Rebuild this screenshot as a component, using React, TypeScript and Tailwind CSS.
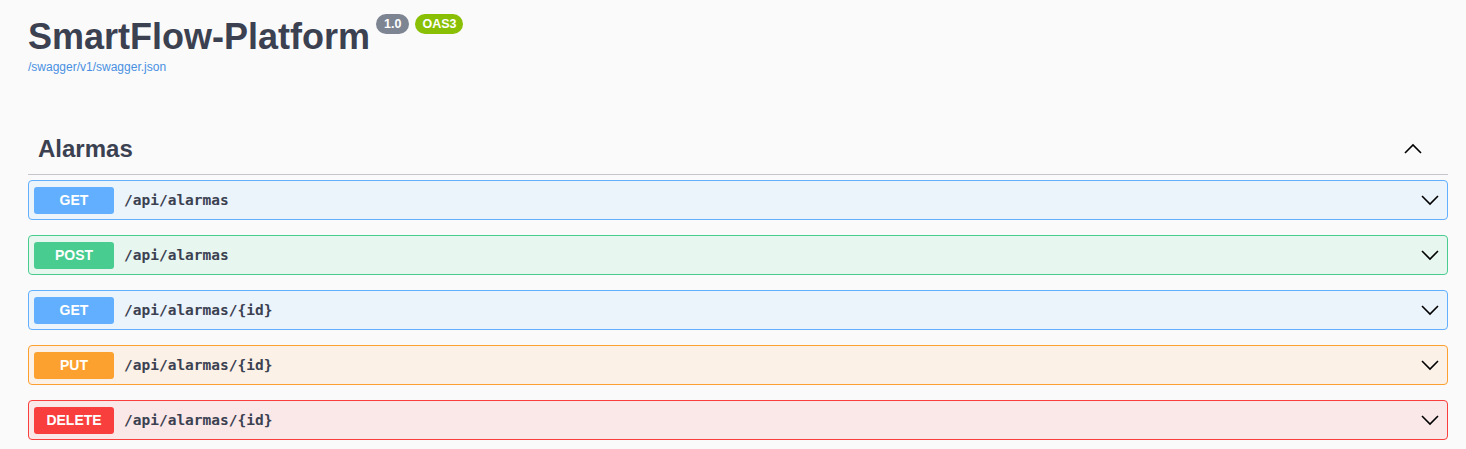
import React from "react";

type Op = { method: string; path: string };

const ops: Op[] = [
  { method: "GET", path: "/api/alarmas" },
  { method: "POST", path: "/api/alarmas" },
  { method: "GET", path: "/api/alarmas/{id}" },
  { method: "PUT", path: "/api/alarmas/{id}" },
  { method: "DELETE", path: "/api/alarmas/{id}" },
];

const styles: Record<string, { box: string; badge: string }> = {
  GET: { box: "border-[#61affe] bg-[#ebf3fb]", badge: "bg-[#61affe]" },
  POST: { box: "border-[#49cc90] bg-[#e8f6f0]", badge: "bg-[#49cc90]" },
  PUT: { box: "border-[#fca130] bg-[#fbf1e6]", badge: "bg-[#fca130]" },
  DELETE: { box: "border-[#f93e3e] bg-[#fae7e7]", badge: "bg-[#f93e3e]" },
};

const Chevron = ({ up }: { up?: boolean }) => (
  <svg width="20" height="20" viewBox="0 0 20 20" className="text-black">
    <path
      d={up ? "M2 14 L10 6 L18 14" : "M2 6 L10 14 L18 6"}
      fill="none"
      stroke="currentColor"
      strokeWidth="1.6"
    />
  </svg>
);

const OpBlock = ({ op }: { op: Op }) => {
  const s = styles[op.method];
  return (
    <div className={`flex h-[40px] items-center rounded-[4px] border pl-[5px] pr-[7px] ${s.box}`}>
      <span
        className={`flex h-[27px] w-[80px] items-center justify-center rounded-[3px] text-[14px] font-bold text-white ${s.badge}`}
      >
        {op.method}
      </span>
      <span className="ml-[10px] mt-[2px] font-['DejaVu_Sans_Mono',monospace] text-[14.5px] font-bold text-[#3b4151]">
        {op.path}
      </span>
      <span className="ml-auto">
        <Chevron />
      </span>
    </div>
  );
};

export default function App() {
  return (
    <div className="min-h-[449px] bg-[#fafafa] pl-[28px] pr-[18px] font-['Liberation_Sans',Arial,sans-serif] text-[#3b4151]">
      <div className="pt-[13px]">
        <div className="flex items-start">
          <h1 className="text-[36px] font-bold leading-[47px]">SmartFlow-Platform</h1>
          <div className="ml-[6px] mt-[1px] flex gap-[6px]">
            <span className="rounded-full bg-[#7d8492] px-[8px] py-[2px] text-[12.5px] font-bold leading-[16px] text-white">
              1.0
            </span>
            <span className="rounded-full bg-[#89bf04] px-[7px] py-[2px] text-[12.5px] font-bold leading-[16px] text-white">
              OAS3
            </span>
          </div>
        </div>
        <a className="block text-[12px] leading-[14px] text-[#4990e2]">/swagger/v1/swagger.json</a>
      </div>

      <div className="mt-[50px]">
        <div className="flex h-[51px] items-center border-b border-[#c4c6cb] pl-[10px] pr-[25px]">
          <h3 className="text-[24px] font-bold">Alarmas</h3>
          <span className="ml-auto">
            <Chevron up />
          </span>
        </div>
        <div className="mt-[5px] flex flex-col gap-[15px]">
          {ops.map((op, i) => (
            <OpBlock key={i} op={op} />
          ))}
        </div>
      </div>
    </div>
  );
}
